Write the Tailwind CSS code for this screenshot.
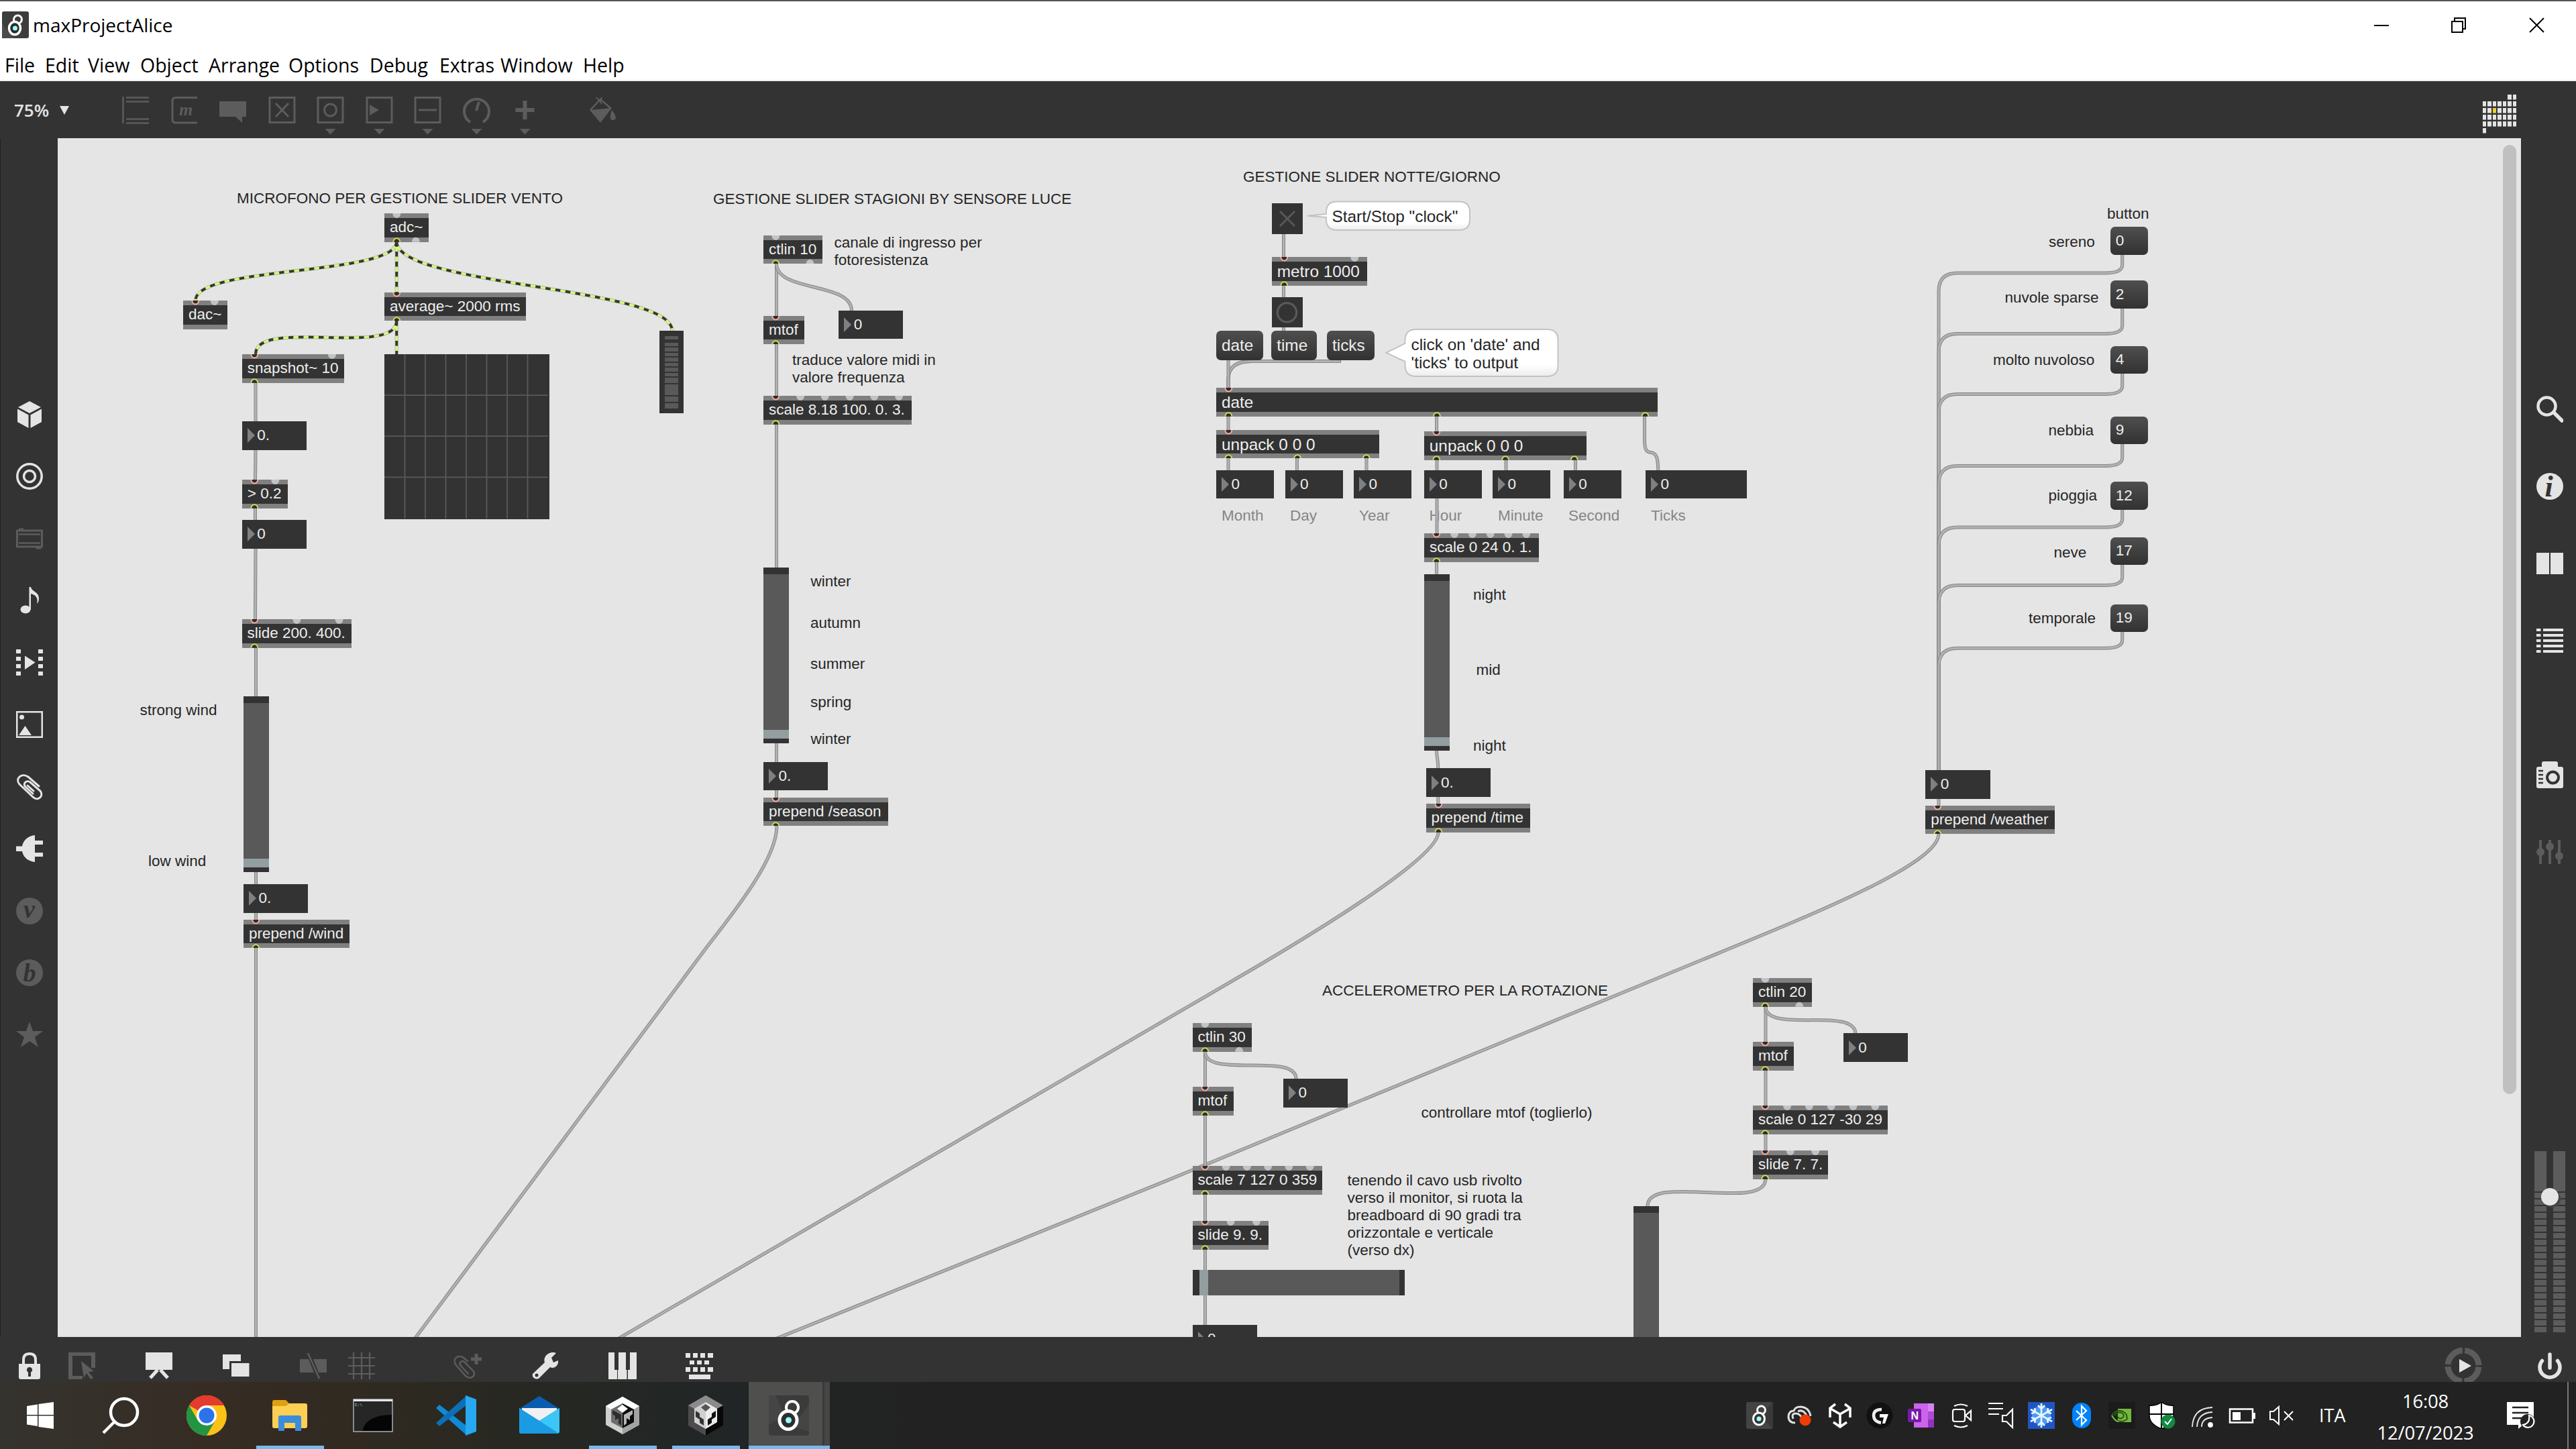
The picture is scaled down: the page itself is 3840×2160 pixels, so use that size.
<!DOCTYPE html>
<html lang="it">
<head>
<meta charset="utf-8">
<title>maxProjectAlice</title>
<script src="https://cdn.jsdelivr.net/npm/@tailwindcss/browser@4"></script>
</head>
<body class="w-[3840px] h-[2160px] overflow-hidden flex flex-col bg-[#333333] font-['Open_Sans',sans-serif]">

<!-- title bar and menu -->
<header class="h-[121px] shrink-0 bg-white border-t-2 border-t-[#555555] border-b-2 border-b-[#f0f0f0] flex flex-col text-black">
  <div class="h-[70px] flex items-center">
    <svg class="ml-[3px] w-10 h-10" viewBox="0 0 40 40"><rect width="40" height="40" rx="3" fill="#3d3d3d"/><path d="M0 40V18L18 40z" fill="#4b4b4b"/><circle cx="23.500" cy="12" r="6" fill="none" stroke="#fff" stroke-width="3"/><ellipse cx="19" cy="25" rx="8.500" ry="9.500" fill="#2a2a2a" stroke="#fff" stroke-width="3.500"/><circle cx="19.500" cy="25" r="3.500" fill="#9ff"/></svg>
    <span class="ml-[6px] text-[28px] leading-10">maxProjectAlice</span>
    <div class="ml-auto flex items-center">
      <svg class="w-[116px] h-[60px]" viewBox="0 0 116 60" fill="none" stroke="#000" stroke-width="2"><path d="M47 31h22"/></svg>
      <svg class="w-[116px] h-[60px]" viewBox="0 0 116 60" fill="none" stroke="#000" stroke-width="2"><path d="M47 25h16v16h-16zM51 25v-5h16v16h-4"/></svg>
      <svg class="w-[116px] h-[60px]" viewBox="0 0 116 60" fill="none" stroke="#000" stroke-width="2"><path d="M47 20l21 21M68 20l-21 21"/></svg>
    </div>
  </div>
  <nav class="h-[47px] flex pl-[7px] text-[28.500px] leading-[50px] whitespace-nowrap">
    <span class="w-[60px]">File</span><span class="w-[64px]">Edit</span><span class="w-[78px]">View</span><span class="w-[102px]">Object</span><span class="w-[119px]">Arrange</span><span class="w-[121px]">Options</span><span class="w-[104px]">Debug</span><span class="w-[91px]">Extras</span><span class="w-[123px]">Window</span><span>Help</span>
  </nav>
</header>

<!-- object toolbar -->
<div class="h-[85px] shrink-0 flex items-start text-[#e4e4e4]">
  <div class="w-[165px] pl-[21px] pt-[25px] flex items-center text-[26px] leading-[36px] font-semibold">75%<svg class="ml-[16px] w-[14px] h-[13px]" viewBox="0 0 14 13"><path d="M0 0h14l-7 13z" fill="#e4e4e4"/></svg></div>
  <div class="flex pt-[21px] text-[#5c5c5c]">
    <svg class="w-[72.500px] h-[60px]" viewBox="0 0 72.500 60" fill="none" stroke="currentColor" stroke-width="2.500"><path d="M18.500 2v40M23 3.500h34M23 9.500h34M23 35.500h34M23 41.500h34"/></svg>
    <svg class="w-[72.500px] h-[60px]" viewBox="0 0 72.500 60" fill="none" stroke="currentColor" stroke-width="3"><path d="M56 3.500H24q-5 0-5 5v28q0 4.500 5 4.500h32"/><text x="29" y="30" font-family="Liberation Serif" font-style="italic" font-weight="bold" font-size="26" fill="currentColor" stroke="none">m</text></svg>
    <svg class="w-[72.500px] h-[60px]" viewBox="0 0 72.500 60"><path d="M17 9h40v23h-6v9l-10-9H17z" fill="currentColor"/></svg>
    <svg class="w-[72.500px] h-[60px]" viewBox="0 0 72.500 60" fill="none" stroke="currentColor" stroke-width="3"><path d="M19 3.500h37v37H19zM28 12l19 20M47 12l-19 20"/></svg>
    <svg class="w-[72.500px] h-[60px]" viewBox="0 0 72.500 60" fill="none" stroke="currentColor" stroke-width="3"><path d="M19 3.500h37v37H19z"/><circle cx="37.500" cy="22" r="9"/><path d="M29.500 50h16l-8 8.500z" fill="currentColor" stroke="none"/></svg>
    <svg class="w-[72.500px] h-[60px]" viewBox="0 0 72.500 60" fill="none" stroke="currentColor" stroke-width="3"><path d="M19 3.500h37v37H19z"/><path d="M23 14l14 8-14 8zM29.500 50h16l-8 8.500z" fill="currentColor" stroke="none"/></svg>
    <svg class="w-[72.500px] h-[60px]" viewBox="0 0 72.500 60" fill="none" stroke="currentColor" stroke-width="3"><path d="M19 3.500h37v37H19zM24 22h27"/><path d="M29.500 50h16l-8 8.500z" fill="currentColor" stroke="none"/></svg>
    <svg class="w-[72.500px] h-[60px]" viewBox="0 0 72.500 60" fill="none" stroke="currentColor" stroke-width="4"><path d="M28 40a18.500 18.500 0 1 1 19 0M37 23l4-13"/><path d="M29.500 50h16l-8 8.500z" fill="currentColor" stroke="none"/></svg>
    <svg class="w-[72.500px] h-[60px]" viewBox="0 0 72.500 60" fill="none" stroke="currentColor" stroke-width="6"><path d="M37.500 8v28M23.500 22h28"/><path d="M29.500 50h16l-8 8.500z" fill="currentColor" stroke="none"/></svg>
    <svg class="ml-[42px] w-[72.500px] h-[60px]" viewBox="0 0 72.500 60"><path d="M20 22L35 6l16 14" fill="none" stroke="currentColor" stroke-width="2.500"/><path d="M19 22l33-3-17 22zM52 22q8 10 5 14-4 3-7-1-1-5 2-13z" fill="currentColor"/><path d="M29 3l8 10M37 3l-2 7" stroke="currentColor" stroke-width="2"/></svg>
  </div>
  <div class="ml-auto mr-[89px] pt-[20px]"><svg id="matrix" class="w-[50px] h-[60px]" viewBox="0 0 50 60"></svg></div>
</div>

<main class="h-[1787px] shrink-0 flex">
  <!-- left sidebar -->
  <aside class="w-[86px] border-l border-l-[#222222] flex flex-col items-center gap-[52.500px] pt-[391.500px] text-[#e4e4e4]">
    <svg class="w-10 h-10" viewBox="0 0 40 40" fill="currentColor"><path d="M20 0l17 9-17 9L3 9zM2 11.500l16.500 9V40L2 31zM38 11.500l-16.500 9V40L38 31z"/></svg>
    <svg class="w-10 h-10" viewBox="0 0 40 40" fill="none" stroke="currentColor" stroke-width="3.500"><circle cx="20" cy="20" r="18.200"/><circle cx="20" cy="20" r="8.500"/></svg>
    <svg class="w-10 h-10" viewBox="0 0 40 40" fill="none" stroke="#5c5c5c"><rect x="1.500" y="8" width="37" height="24" stroke-width="3"/><path d="M4 13.500h32M4 26.500h32" stroke-width="2.500"/><path d="M4 6h7M30 34h7" stroke-width="3"/></svg>
    <svg class="w-10 h-10" viewBox="0 0 40 40" fill="currentColor"><ellipse cx="14" cy="33.500" rx="7.500" ry="6"/><path d="M19.500 0h2.500c1 7 12 7 12 17 0 4-1 6-3 8 2-8-1-13-9-15v24h-2.500z"/></svg>
    <svg class="w-10 h-10" viewBox="0 0 40 40" fill="currentColor"><path d="M0 0h7v6H0zM0 11h7v6H0zM0 22h7v6H0zM0 33h7v6H0zM33 0h7v6h-7zM33 11h7v6h-7zM33 22h7v6h-7zM33 33h7v6h-7zM13 9.500l15.500 10L13 30z"/></svg>
    <svg class="w-10 h-10" viewBox="0 0 40 40" fill="none" stroke="currentColor" stroke-width="2.500"><path d="M1.250 1.250h37.500v37.500H1.250z"/><path d="M4 36l9.500-14L23 36z" fill="currentColor" stroke="none"/><circle cx="8.500" cy="9" r="3.500" fill="currentColor" stroke="none"/></svg>
    <svg class="w-10 h-10" viewBox="0 0 40 40" fill="none" stroke="currentColor" stroke-width="3" stroke-linecap="round"><path d="M34 19L18 5C8-2-2 8 5 16l20 19c7 7 17-1 11-9L21 13c-5-4-12 2-7 7l11 10M26 26L17 18"/></svg>
    <svg class="w-10 h-10" viewBox="0 0 40 40" fill="currentColor"><path d="M0 16.500h9C11 6 19 1 28 0v8h12v6H28v12h12v6H28v8C19 39 11 34 9 24H0z"/></svg>
    <svg class="w-10 h-10 overflow-visible" viewBox="0 0 40 40"><circle cx="20" cy="20" r="20" fill="#5c5c5c"/><text x="11" y="30" font-family="Liberation Serif" font-style="italic" font-weight="bold" font-size="38" fill="#333">v</text></svg>
    <svg class="w-10 h-10 overflow-visible" viewBox="0 0 40 40"><circle cx="20" cy="20" r="20" fill="#5c5c5c"/><text x="10.500" y="33" font-family="Liberation Serif" font-style="italic" font-weight="bold" font-size="38" fill="#333">b</text></svg>
    <svg class="w-10 h-10" viewBox="0 0 40 40" fill="#5c5c5c"><path d="M20 0l5 14h15L28 23l5 15-13-9-13 9 5-15L0 14h15z"/></svg>
  </aside>

  <!-- patcher canvas: objects sit at free positions -->
  <section id="canvas" class="relative w-[3672px] bg-[#e5e5e5] overflow-hidden font-['Liberation_Sans',sans-serif] text-[22.500px] leading-[26px] text-[#262626] whitespace-pre">
    <div class="absolute right-[7px] top-[10px] w-5 h-[1415px] rounded-[10px] bg-[#c0c0c0]"></div>
  </section>

  <!-- right sidebar -->
  <aside class="w-[82px] flex flex-col items-center pl-[4px] pt-[384px] text-[#e4e4e4]">
    <svg class="w-10 h-10" viewBox="0 0 40 40" fill="none" stroke="currentColor"><circle cx="15.500" cy="15.500" r="13" stroke-width="4.500"/><path d="M26 25l12 12" stroke-width="5.500" stroke-linecap="round"/></svg>
    <svg class="mt-[75px] w-10 h-10 overflow-visible" viewBox="0 0 40 40"><circle cx="20" cy="20" r="20" fill="currentColor"/><text x="12.500" y="34.500" font-family="Liberation Serif" font-style="italic" font-weight="bold" font-size="44" fill="#333">i</text></svg>
    <svg class="mt-[75px] w-10 h-10" viewBox="0 0 40 40" fill="currentColor"><path d="M0 4h19v32H0zM21 4h19v32H21z"/></svg>
    <svg class="mt-[75px] w-10 h-10" viewBox="0 0 40 40" fill="none" stroke="currentColor" stroke-width="4"><path d="M0 4h6.500M10 4h30M0 12h6.500M10 12h30M0 20h6.500M10 20h30M0 28h6.500M10 28h30M0 36h6.500M10 36h30"/></svg>
    <svg class="mt-[160px] w-10 h-10" viewBox="0 0 40 40"><path d="M8 8V3q0-3 3-3h18q3 0 3 3v5h5q3 0 3 3v26q0 3-3 3H3q-3 0-3-3V11q0-3 3-3z" fill="currentColor"/><circle cx="24.500" cy="24" r="8.500" fill="none" stroke="#333" stroke-width="4"/><path d="M3 14h7M3 20h7M3 26h7M3 32h7" stroke="#333" stroke-width="2.500"/></svg>
    <svg class="mt-[75px] w-10 h-10" viewBox="0 0 40 40" fill="#5c5c5c"><path d="M4 2h4v36H4zM18 2h4v36h-4zM32 2h4v36h-4z"/><circle cx="6" cy="20" r="6"/><circle cx="20" cy="12" r="6"/><circle cx="34" cy="26" r="6"/></svg>
    <div class="relative mt-[426px] w-[46px] h-[270px] flex justify-between">
      <div class="w-[18px] bg-[linear-gradient(#5c5c5c,#5c5c5c)] bg-[length:100%_60px] bg-no-repeat pt-[62px]"><div class="h-[208px] bg-[repeating-linear-gradient(#5c5c5c_0_8px,#333_8px_10px)]"></div></div>
      <div class="w-[18px] bg-[linear-gradient(#5c5c5c,#5c5c5c)] bg-[length:100%_60px] bg-no-repeat pt-[62px]"><div class="h-[208px] bg-[repeating-linear-gradient(#5c5c5c_0_8px,#333_8px_10px)]"></div></div>
      <div class="absolute left-[10px] top-[55px] size-[26px] rounded-full bg-[#e4e4e4] shadow-[3px_3px_0_#444]"></div>
    </div>
  </aside>
</main>

<!-- patcher footer -->
<footer class="h-[67px] shrink-0 overflow-hidden flex items-start pt-[23px] pl-[24px] text-[#e4e4e4]">
  <svg class="w-10 h-10" viewBox="0 0 40 40"><path d="M4 17h32v20q0 3-3 3H7q-3 0-3-3z" fill="currentColor"/><path d="M11 18v-7q0-9 9-9t9 9v7" fill="none" stroke="currentColor" stroke-width="4"/><path d="M20 22a4 4 0 0 1 2 7.500V36h-4v-6.500a4 4 0 0 1 2-7.500z" fill="#333"/></svg>
  <svg class="ml-[38px] w-10 h-10" viewBox="0 0 40 40"><path d="M0 0h40v23h-6V5H6v30h15v5H0z" fill="#5c5c5c"/><path d="M19 13l19 15-8 1 7 9-4 2-6-9-4 7z" fill="#5c5c5c"/></svg>
  <svg class="ml-[75px] w-10 h-10" viewBox="0 0 40 40"><path d="M0 0h40v26H0z" fill="currentColor"/><path d="M18 26L7 38M22 26l11 12" stroke="currentColor" stroke-width="5"/></svg>
  <svg class="ml-[75px] w-[42px] h-10" viewBox="0 0 42 40"><path d="M0 3h27v22H0z" fill="currentColor"/><path d="M11.500 14.500H41v23H11.500z" fill="currentColor" stroke="#333" stroke-width="3"/></svg>
  <svg class="ml-[73px] w-10 h-10" viewBox="0 0 40 40"><path d="M0 10h13l8 20H0zM40 10H20l8 20h12z" fill="#5c5c5c"/><path d="M12 1l17 38" stroke="#5c5c5c" stroke-width="2.500"/></svg>
  <svg class="ml-[32px] w-10 h-10" viewBox="0 0 40 40" fill="none" stroke="#5c5c5c" stroke-width="2.200"><path d="M8 0v40M20 0v40M32 0v40M0 8h40M0 20h40M0 32h40"/></svg>
  <svg class="ml-[117px] w-[42px] h-10" viewBox="0 0 42 40" fill="none" stroke="#5c5c5c" stroke-width="2.500" stroke-linecap="round"><path d="M21 13l-6-5C7 2-3 10 4 19l14 16c8 7 17-1 11-8L16 14c-4-3-9 2-5 6l11 12"/><path d="M34 2v16M26 10h16" stroke-width="5" stroke-linecap="butt"/></svg>
  <svg class="ml-[75px] w-10 h-10" viewBox="0 0 40 40"><path d="M36 1l-7 7 3 7 7-3c1 8-6 13-12 10L11 38c-4 4-12 0-10-6l18-17C16 7 24-1 33 0z" fill="currentColor"/><circle cx="7" cy="34" r="2.500" fill="#333"/></svg>
  <svg class="ml-[74px] w-[42px] h-10" viewBox="0 0 42 40" fill="currentColor"><path d="M0 0h9v26h4v14H0zM15 26V0h11v26h1.500v14H14V26zM32 0h10v40H29V26h3z"/></svg>
  <svg class="ml-[73px] w-[42px] h-10" viewBox="0 0 42 40" fill="currentColor"><path d="M0 1h7v7H0zM11 1h7v7h-7zM22 1h7v7h-7zM33 1h8v7h-8zM6 12h7v6H6zM17 12h7v6h-7zM28 12h7v6h-7zM0 22h7v7H0zM11 22h7v7h-7zM22 22h7v7h-7zM33 22h8v7h-8zM5 33h32v7H5z"/></svg>
  <svg class="ml-auto -mt-[8px] w-[56px] h-[56px] shrink-0" viewBox="0 0 56 56"><circle cx="28" cy="28" r="23" fill="none" stroke="#5c5c5c" stroke-width="9" stroke-dasharray="32.600 3.500" stroke-dashoffset="-1.750"/><path d="M22 18l18 10-18 10z" fill="currentColor"/></svg>
  <svg class="ml-[81px] mr-[19px] w-10 h-10" viewBox="0 0 40 40" fill="none" stroke="currentColor" stroke-width="5.500" stroke-linecap="round"><path d="M8.500 12.500a15 15 0 1 0 23 0M20 3v20"/></svg>
</footer>

<!-- Windows taskbar -->
<div class="h-[100px] shrink-0 flex bg-[linear-gradient(90deg,#35332e_0%,#362c24_8%,#302a21_14%,#272822_20%,#222626_27%,#222222_36%,#222222_100%)] text-white">
  <div class="w-[120px] flex items-center justify-center"><svg class="w-10 h-10" viewBox="0 0 40 40" fill="#fff"><path d="M0 6l16-2.500V19H0zM17.500 3L40 0v19H17.500zM0 20.500h16V36L0 33.500zM17.500 20.500H40V40l-22.500-3z"/></svg></div>
  <div class="w-[126px] pl-[32px] flex items-center"><svg class="w-[56px] h-[56px]" viewBox="0 0 56 56" fill="none" stroke="#fff" stroke-width="4.500"><circle cx="33" cy="23" r="20"/><path d="M19 37L2 54"/></svg></div>
  <div class="w-[124px] flex items-center justify-center"><svg class="w-[60px] h-[60px]" viewBox="0 0 60 60"><circle cx="30" cy="30" r="30" fill="#fbc116"/><path d="M30 30L4 15A30 30 0 0 1 56 15H30z" fill="#e33b2e"/><path d="M4 15A30 30 0 0 0 30 60L43 37.500 30 44 17 37.500z" fill="#249443"/><circle cx="30" cy="30" r="15" fill="#fff"/><circle cx="30" cy="30" r="11.500" fill="#2a73e8"/></svg></div>
  <div class="w-[124px] px-[12px] flex flex-col items-center"><svg class="mt-[27px] w-[52px] h-[46px]" viewBox="0 0 52 46"><path d="M0 3q0-3 3-3h17l5 5-4 5H0z" fill="#e0a010"/><path d="M0 9h20l5-4h24q3 0 3 3v31q0 3-3 3H3q-3 0-3-3z" fill="#fdcf55"/><path d="M9 46V26q0-3 3-3h28q3 0 3 3v20h-9V34H18v12z" fill="#3b8ddb"/></svg><div class="mt-auto h-[5px] w-[101px] bg-[#76b9ed]"></div></div>
  <div class="w-[124px] flex items-center justify-center"><svg class="w-[60px] h-[50px]" viewBox="0 0 60 50"><rect x="1" y="1" width="58" height="48" fill="#050505" stroke="#a9b0b8" stroke-width="1.500"/><path d="M2 2h56v22Q20 24 14 48H2z" fill="#262626"/><path d="M1 1h58v3H1z" fill="#e4e6ea"/><text x="3" y="11" font-family="Liberation Mono" font-size="6" fill="#ddd">C:\</text></svg></div>
  <div class="w-[124px] flex items-center justify-center"><svg class="w-[60px] h-[60px]" viewBox="0 0 60 60"><path d="M0 19l5-5 41 32v14z" fill="#0f8ad6"/><path d="M0 41l5 5L46 14V0z" fill="#0b6fb8"/><path d="M44 0l16 6v48l-16 6z" fill="#27a9f1"/></svg></div>
  <div class="w-[124px] flex items-center justify-center"><svg class="-mt-[2px] w-[60px] h-[56px]" viewBox="0 0 60 56"><path d="M0 19L30 0l30 19v6H0z" fill="#0a5cb0"/><path d="M4 18h52v10L30 42 4 28z" fill="#f1f1f3"/><path d="M0 18l30 19L60 18v35q0 3-3 3H3q-3 0-3-3z" fill="#1fa2e6"/><path d="M60 18L30 37l28 18q2-1 2-3z" fill="#3cc6f5"/><path d="M0 18v35q0 3 3 3h54L30 37z" fill="#1b9be2"/></svg></div>
  <div class="w-[124px] flex flex-col items-center"><svg class="mt-[22px] w-[50px] h-[56px]" viewBox="0 0 50 56"><path d="M25 0l25 14v28L25 56 0 42V14z" fill="#cfcfcf"/><path d="M25 0l25 14-8 5-17-9-17 9-8-5z" fill="#fff"/><path d="M50 14v28L25 56v-9l17-9V19z" fill="#a3a3a3"/><path d="M25 10l17 9v19l-17 9z" fill="#0c0c0c"/><path d="M25 10L8 19v19l17 9z" fill="#6d6d6d"/><path d="M25 12l8 6-8 6-8-6z" fill="#fff"/><path d="M10 20l13 7v16l-4-3v-8l-5 3v-6l-4-3z" fill="#2c2c2c"/><path d="M40 20l-13 7v16l4-3v-8l5 3v-6l4-3z" fill="#b5b5b5"/></svg><div class="mt-auto h-[5px] w-[101px] bg-[#76b9ed]"></div></div>
  <div class="w-[124px] flex flex-col items-center"><svg class="mt-[20px] w-[52px] h-[60px]" viewBox="0 0 52 60"><path d="M26 0l26 15v30L26 60 0 45V15z" fill="#4c4c4c"/><path d="M26 0l26 15-9 5-17-10-17 10-9-5z" fill="#8b8b8b"/><path d="M52 15v30L26 60V50l17-10V20z" fill="#080808"/><path d="M26 10l17 10v20l-17 10L9 40V20z" fill="#ececec"/><path d="M26 10v40L9 40V20z" fill="#cfcfcf"/><path d="M26 13l7 5-7 6-7-6z" fill="#555"/><path d="M11 23l6 4v5l6 4v9l-6-4v-5l-6-4z" fill="#333"/><path d="M41 23l-6 4v5l-6 4v9l6-4v-5l6-4z" fill="#111"/></svg><div class="mt-auto h-[5px] w-[101px] bg-[#76b9ed]"></div></div>
  <div class="ml-[2px] w-[121px] flex flex-col bg-[linear-gradient(90deg,#4f4f4d_0_110px,#393939_110px_113px,#464645_113px)]"><svg class="mt-[20px] ml-[30px] w-[60px] h-[60px]" viewBox="0 0 60 60"><rect width="60" height="60" rx="4" fill="#3b3b3b"/><path d="M0 0h10l14 30L0 44zM60 14L36 46l24 8z" fill="#454545"/><circle cx="35" cy="18" r="9" fill="none" stroke="#fff" stroke-width="4"/><ellipse cx="29" cy="37" rx="13" ry="13.500" fill="#2e2e2e" stroke="#fff" stroke-width="5"/><circle cx="29.500" cy="37" r="4.500" fill="#9ff"/></svg><div class="mt-auto h-[5px] bg-[#76b9ed]"></div></div>

  <div class="ml-auto flex items-center">
    <svg class="w-[60px] h-10" viewBox="-10 0 60 40"><rect width="40" height="40" rx="3" fill="#444"/><path d="M40 0L20 20l20 20z" fill="#393939"/><circle cx="22.500" cy="12" r="6" fill="none" stroke="#fff" stroke-width="2.800"/><ellipse cx="19" cy="25" rx="8.500" ry="9" fill="#333" stroke="#fff" stroke-width="3"/><circle cx="19" cy="25" r="3.500" fill="#9ff"/></svg>
    <svg class="w-[60px] h-10" viewBox="-10 0 60 40" fill="none" stroke="#ddd"><path d="M13 31q-10 0-10-10 1-8 8-8 2-6 10-6 13 1 15 14" stroke-width="3"/><path d="M10 25q-3-8 4-8 6 0 10 8M17 14q8-4 13 6" stroke-width="3"/><circle cx="28" cy="27" r="8.500" fill="#f03c02" stroke="none"/></svg>
    <svg class="w-[60px] h-10" viewBox="-10 0 60 40" fill="none" stroke="#fff" stroke-width="3.500"><path d="M13 3L5 9v14M27 3l8 6v14M6 10l14 8 14-8M20 18v18M10 30l10 7 10-7"/></svg>
    <svg class="w-[60px] h-10" viewBox="-10 0 60 40"><circle cx="19" cy="20" r="19.500" fill="#111"/><path d="M22 11q-12 0-12 9t11 11" fill="none" stroke="#eee" stroke-width="4.500"/><path d="M19 18h13l-5 14h-4l2-9h-6z" fill="#fff"/></svg>
    <svg class="w-[60px] h-10" viewBox="-10 0 60 40"><path d="M10 2h30v36H10z" fill="#ca64ea"/><path d="M31 2h9v12h-9z" fill="#d783f2"/><path d="M31 14h9v12h-9z" fill="#ae4bd5"/><path d="M31 26h9v12h-9z" fill="#9332bf"/><rect x="1" y="10" width="20" height="20" rx="2" fill="#7719aa"/><text x="5.500" y="26" font-family="Liberation Sans" font-weight="bold" font-size="16" fill="#fff">N</text></svg>
    <svg class="w-[60px] h-10" viewBox="-10 0 60 40" fill="none" stroke="#fff" stroke-width="2.200"><rect x="8" y="11" width="18" height="18" rx="3"/><path d="M27 20l8-7v14zM10 6q10-5 20 0M10 35q10 5 20 0"/></svg>
    <svg class="w-[60px] h-10" viewBox="-10 0 60 40" fill="none" stroke="#fff" stroke-width="2.200"><path d="M1 2h22M1 10h22M1 18h16M22 20h6l9-9v27l-9-9h-6z"/></svg>
    <svg class="w-[60px] h-10" viewBox="-10 0 60 40"><rect width="40" height="40" fill="#1f56c4"/><circle cx="20" cy="20" r="14" fill="#4f9af0"/><path d="M20 2v36M4 11l32 18M36 11L4 29M15 5l5 5 5-5M15 35l5-5 5 5M5 17l6-2-1-6M35 17l-6-2 1-6M5 23l6 2-1 6M35 23l-6 2 1 6" fill="none" stroke="#e3f4ff" stroke-width="2.800"/></svg>
    <svg class="w-[60px] h-10" viewBox="-10 0 60 40"><rect x="6" y="1" width="28" height="38" rx="14" fill="#0082fc"/><path d="M12 13l15 14-7 7V6l7 7-15 14" fill="none" stroke="#fff" stroke-width="2.200"/></svg>
    <svg class="w-[60px] h-10" viewBox="-10 0 60 40"><rect width="40" height="40" fill="#1b1b1b"/><path d="M14 10h20v20H14z" fill="#76b83f"/><path d="M5 20q8-11 18-5 6 4 4 9M9 20q6-7 12-3 4 4-1 7-5 2-7-4M5 20q5 9 15 9 6-1 9-5" fill="none" stroke="#2c5a14" stroke-width="2"/><path d="M5 20q5 9 10 9" fill="none" stroke="#76b83f" stroke-width="2"/></svg>
    <svg class="w-[60px] h-10" viewBox="-10 0 60 40"><path d="M19 0q8 6 18 5v15q0 13-18 20Q1 33 1 20V5q11 1 18-5z" fill="#fff" stroke="#000" stroke-width="1.500"/><path d="M19 0v40M1 18h36" stroke="#000" stroke-width="2"/><circle cx="29" cy="29" r="10.500" fill="#128a43"/><path d="M24 29l4 4 6-8" fill="none" stroke="#fff" stroke-width="2"/></svg>
    <svg class="w-[60px] h-10" viewBox="-10 0 60 40" fill="none" stroke="#fff" stroke-width="1.800"><path d="M5 37Q6 9 35 8M12 37q1-21 23-22M19 37q0-13 16-14" opacity=".9"/><circle cx="32" cy="34" r="3" fill="#fff"/></svg>
    <svg class="w-[60px] h-10" viewBox="-10 0 60 40" fill="none" stroke="#fff" stroke-width="2.500"><path d="M1 10.500h34v20H1z"/><path d="M5 15h12v12H5zM36 16h3v9h-3z" fill="#fff" stroke="none"/></svg>
    <svg class="w-[60px] h-10" viewBox="-10 0 60 40" fill="none" stroke="#fff" stroke-width="2"><path d="M1 14h5l8-7v26l-8-7H1zM22 14l13 13M35 14L22 27"/></svg>
    <span class="ml-[24px] w-[48px] text-[27px] leading-9">ITA</span>
    <div class="ml-[22px] w-[177px] pt-[3px] flex flex-col items-center text-[27.500px] leading-[47px] tracking-[-0.2px]"><span>16:08</span><span>12/07/2023</span></div>
    <svg class="ml-[33px] mr-[48px] w-[42px] h-10" viewBox="0 0 42 40"><path d="M0 0h40v34H24l-7 6v-6H0z" fill="#fff"/><path d="M8 8h24M8 16h24M8 24h16" stroke="#222" stroke-width="2.500"/><circle cx="31" cy="29" r="11" fill="#222"/><path d="M33 20a9 9 0 1 1-9 14q11-2 9-14z" fill="none" stroke="#fff" stroke-width="2.200"/></svg>
    <div class="h-[100px] w-[13px] border-l-2 border-l-[#777777]"></div>
  </div>
</div>

<script>
const OX = 86, OY = 206;
const canvas = document.getElementById('canvas');
const put = (cls, x, y, w, h, html) => {
  const d = document.createElement('div');
  d.className = cls;
  d.style.left = (x - OX) + 'px'; d.style.top = (y - OY) + 'px';
  if (w) d.style.width = w + 'px';
  if (h) d.style.height = h + 'px';
  d.innerHTML = html || '';
  canvas.appendChild(d);
};
const esc = s => s.replace(/>/g, '&gt;');

// comments: x, baseline, text
const label = (x, b, t) => put('absolute', x, b - 20.3, 0, 0, t);
[[353,303.5,'MICROFONO PER GESTIONE SLIDER VENTO'],[1063,304,'GESTIONE SLIDER STAGIONI BY SENSORE LUCE'],[1853,271.500,'GESTIONE SLIDER NOTTE/GIORNO'],[1971,1484,'ACCELEROMETRO PER LA ROTAZIONE'],
 [208.5,1066.4,'strong wind'],[221,1291.5,'low wind'],
 [1243.5,369.5,'canale di ingresso per\nfotoresistenza'],[1181,544,'traduce valore midi in\nvalore frequenza'],
 [1208.5,874,'winter'],[1208,936.7,'autumn'],[1208,997.5,'summer'],[1208,1054.5,'spring'],[1208.5,1109.5,'winter'],
 [2196,894,'night'],[2200.5,1006.7,'mid'],[2196,1119,'night'],
 [3141,326.3,'button'],[3054,368.5,'sereno'],[2988.5,451,'nuvole sparse'],[2971,543.8,'molto nuvoloso'],[3053.5,649,'nebbia'],[3053.5,746.3,'pioggia'],[3061.500,831,'neve'],[3024,929,'temporale'],
 [2118.5,1666.4,'controllare mtof (toglierlo)'],
 [2008.5,1766.8,'tenendo il cavo usb rivolto\nverso il monitor, si ruota la\nbreadboard di 90 gradi tra\norizzontale e verticale\n(verso dx)']
].forEach(a => label(...a));
[[1821,'Month'],[1923,'Day'],[2026,'Year'],[2130.5,'Hour'],[2233,'Minute'],[2338,'Second'],[2461,'Ticks']]
  .forEach(([x, t]) => put('absolute text-[#858585]', x, 756.2, 0, 0, t));

// patch cords
const cords = [
  'M381 571V628','M381 670L380.5 715','M380.500 757V775','M381 818L380.500 923','M381.500 966V1038','M381.500 1300V1318','M381.500 1360V1371','M381.500 1413V2000',
  'M1157.500 393V471','M1157.500 393C1157.500 436 1269.500 420 1269.500 463','M1157.500 513V590','M1157.500 632V846','M1157.500 1108V1136','M1157.500 1177V1189',
  'M1158 1231C1158 1275 1110 1340 1055 1410L615 2000',
  'M1913.500 349V383','M1913.500 426V443','M1913.500 488V493',
  'M1913.500 537V538.500H1866C1842 538.500 1831 548 1831 565V578','M1996.500 537V538.500H1866C1842 538.500 1831 548 1831 565V578','M1831 537V578',
  'M1831 621V641','M2141.500 621V643','M2451.500 621V655C2451.500 670 2454 674 2461 674.500C2469 675.500 2471.700 682 2471.700 701',
  'M1831 683V701','M1933.500 683V701','M2037 683V701','M2142 686V701','M2245 686V701','M2348.500 686V701',
  'M2142 743V796','M2141.500 838V856','M2141.500 1118C2141.500 1130 2143.800 1130 2143.800 1146','M2143.800 1187V1198',
  'M2144 1241C2144 1275 1990 1372 1875 1440L914 2000',
  'M2890 1190V1201','M2890 1243C2890 1290 2685 1370 2515 1440L1740 1759.600L1146 2000',
  'M2632 1501V1553','M2632 1501C2632 1541 2766 1500 2766 1541','M2632 1596V1648','M2632 1690V1715','M2632 1757C2632 1807 2456 1748 2456 1798',
  'M1796.500 1568V1620','M1796.500 1568C1796.500 1608 1932 1568 1932 1608','M1796.500 1663V1738','M1796.500 1780V1820','M1796.500 1863V1893','M1796.500 1931V1975'
];
[[379,407],[459.5,497.5],[557,587.5],[662,694.4],[759.5,786],[842,872.5],[942,966.3]].forEach(([b, h]) =>
  cords.push(`M3163.700 ${b}V${h-12}Q3163.700 ${h} 3138 ${h}H2918Q2890 ${h} 2890 ${h+27}V1149`));
const sig = ['M591.200 360C591.200 412 291.400 395 291.400 448','M591.200 360V436','M591.200 360C591.200 427 1002 427 1002 493','M591.200 478V528','M591.200 478C591.200 533 381 473 381 528'];
const draw = (list, c, w, extra) => list.map(d => `<path d="${d}" stroke="${c}" stroke-width="${w}" ${extra || ''}/>`).join('');
put('absolute', OX, OY, 3672, 1787, `<svg class="block w-full h-full" viewBox="86 206 3672 1787" fill="none">
 ${cords.map(d => draw([d], '#868686', 5) + draw([d], '#b1b1b1', 3)).join('')}
 ${draw(sig, '#a9a9a9', 5)}${draw(sig, '#d6f97c', 3.6)}${draw(sig, '#34382a', 3.8, 'stroke-dasharray="7.500 7.500"')}</svg>`);

// object boxes: x, y, w, text, inlets, outlets (1 = connected), large font
const obj = (x, y, w, t, ins, outs, big, h = 42.7) => {
  const pos = (n, i) => n === 1 ? 18.3 : 18.3 + i * (w - 37) / (n - 1);
  let s = '';
  [...ins].forEach((c, i) => { const p = pos(ins.length, i);
    s += c === '1' ? `<path d="M${p-5} 0a5 5.500 0 0 0 10 0" fill="#2d2d2d" stroke="#f7ab9c" stroke-width="2"/>` : `<path d="M${p-6} 0a6 7 0 0 0 12 0z" fill="#c1c4c6"/>`; });
  [...outs].forEach((c, i) => { const p = pos(outs.length, i);
    s += c === '1' ? `<path d="M${p-5} ${h}a5 5.500 0 0 1 10 0" fill="#2d2d2d" stroke="#cfdb57" stroke-width="2"/>` : `<path d="M${p-6} ${h}a6 7 0 0 1 12 0z" fill="#c1c4c6"/>`; });
  put('absolute bg-[#333333] border-y-[7.500px] border-[#808080] text-[#eeeeee] pl-[8px] ' + (big ? 'text-[24.375px] leading-[29px]' : 'leading-[28px]'), x, y, w, h, esc(t));
  put('absolute', x, y, w, h, `<svg class="block w-full h-full" viewBox="0 0 ${w} ${h}">${s}</svg>`);
};
[[573,318,65.5,'adc~','0','10'],[273,448,65.5,'dac~','10',''],[573,435.5,210.7,'average~ 2000 rms','1','1'],[360.8,528,152.7,'snapshot~ 10','10','1'],
 [360.8,715,68,'> 0.2','10','1'],[360.5,923,163.3,'slide 200. 400.','100','1'],[363,1370.5,157.7,'prepend /wind','1','1'],
 [1138,350.6,88.2,'ctlin 10','0','10'],[1138,470.5,60.8,'mtof','1','1'],[1138,590,220.8,'scale 8.18 100. 0. 3.','100000','1'],[1138,1188.5,186,'prepend /season','1','1'],
 [1895.7,383,142,'metro 1000','10','1',1],[1813,578,658.3,'date','1','111',1],[1813,640.5,242.5,'unpack 0 0 0','1','111',1],[2122.8,643,242.5,'unpack 0 0 0','1','111',1],
 [2122.9,795.2,171,'scale 0 24 0. 1.','100000','1'],[2125.5,1198,155.8,'prepend /time','1','1'],[2870.3,1200.6,192.7,'prepend /weather','1','1'],
 [2613,1458,88,'ctlin 20','0','10'],[2613,1553,61,'mtof','1','1'],[2613,1648,201,'scale 0 127 -30 29','100000','1'],[2613,1715,112,'slide 7. 7.','100','1'],
 [1777.6,1525,88,'ctlin 30','0','10'],[1777.6,1620,61,'mtof','1','1'],[1777.6,1738,193.4,'scale 7 127 0 359','100000','1'],[1777.6,1820,113.6,'slide 9. 9.','100','1']
].forEach(a => obj(...a));

// number boxes
const num = (x, y, w, t) => put('absolute bg-[#333333] text-[#eeeeee] flex items-center pl-[8px]', x, y, w, 42.7,
  `<svg class="w-[11px] h-[22px] mr-[3.500px]" viewBox="0 0 11 22"><path d="M0 0l11 11L0 22z" fill="#808080"/></svg>${t}`);
[[360.8,628,96,'0.'],[360.8,775,96,'0'],[363,1318,96,'0.'],[1250.2,462.8,96.3,'0'],[1138,1135.5,96,'0.'],
 [1813,700.5,86,'0'],[1915.5,700.5,86,'0'],[2018,700.5,86,'0'],[2122.8,700.5,86,'0'],[2225,700.5,86,'0'],[2330.7,700.5,86,'0'],[2453,700.5,150.8,'0'],
 [2125.5,1145.3,96,'0.'],[2870.3,1148,96.3,'0'],[2747.7,1540.4,96,'0'],[1913,1608,96,'0'],[1777.6,1975,96,'0']].forEach(a => num(...a));

// message boxes
const msg = (x, y, w, h, t, big) => put('absolute rounded-[7px] bg-linear-to-b from-[#4f4f4f] to-[#323232] text-[#eeeeee] flex items-center pl-[8px] pb-[1px] ' + (big ? 'text-[24.375px]' : ''), x, y, w, h, t);
[[1813,493,70,44,'date',1],[1895.2,493,68,44,'time',1],[1978,493,71.3,44,'ticks',1],
 [3145.7,338.3,56,41.5,'0'],[3145.7,418.3,56,41.5,'2'],[3145.7,515.8,56,41.5,'4'],[3145.7,620.8,56,41.5,'9'],[3145.7,718.3,56,41.5,'12'],[3145.7,800.8,56,41.5,'17'],[3145.7,900.8,56,41.5,'19']].forEach(a => msg(...a));

// sliders
const vs = (x, y, h, thumb) => put('absolute bg-[#595959] border-t-[10px] border-b-[7px] border-[#333333] flex flex-col justify-end', x, y, 37.8, h, thumb ? '<div class="h-[13px] bg-[#929ea0]"></div>' : '');
vs(363,1038,262.3,1); vs(1138,845.5,262.7,1); vs(2122.9,855.5,263.3,1); vs(2435.4,1798,263,0);
put('absolute bg-[#595959] border-l-[10px] border-r-[8px] border-[#333333] flex', 1777.6, 1893, 316, 38, '<div class="w-[13px] bg-[#929ea0]"></div>');

// scope, level meter, toggle, button
let g = '';
for (let i = 1; i < 8; i++) g += `M${i*30.5} 0V245`;
for (let i = 1; i < 4; i++) g += `M0 ${i*61.1}H244`;
put('absolute bg-[#333333]', 573, 528, 245.7, 246, `<svg class="block w-full h-full" viewBox="0 0 245.700 246"><path d="${g}" stroke="#595959" stroke-width="1.800"/></svg>`);
put('absolute bg-[#333333]', 983, 493, 36, 123, `<svg class="block w-full h-full" viewBox="0 0 36 123" fill="#595959">${[[8,5],[18,5],[25,6],[33,5],[40,6],[48,5],[55,6],[63,5],[70,8],[80,16],[98,8],[108,8]].map(([y,h]) => `<rect x="8" y="${y}" width="20" height="${h}"/>`).join('')}</svg>`);
put('absolute bg-[#333333]', 1895.7, 303, 46, 46, '<svg class="block w-full h-full" viewBox="0 0 46 46"><path d="M12 12l22 22M34 12L12 34" stroke="#595959" stroke-width="2.800"/></svg>');
put('absolute bg-[#333333]', 1895.7, 443.2, 46, 45, '<svg class="block w-full h-full" viewBox="0 0 46 45"><circle cx="22.500" cy="22.800" r="14.200" fill="none" stroke="#595959" stroke-width="3.200"/></svg>');

// hint bubbles
const grad = '<defs><linearGradient id="bub" x1="0" y1="0" x2="0" y2="1"><stop offset=".75" stop-color="#fff"/><stop offset="1" stop-color="#ececec"/></linearGradient></defs>';
put('absolute', 1946, 297, 250, 50, `<svg class="block w-full h-full" viewBox="0 0 250 50">${grad}<path d="M31 22V19Q31 3.500 47 3.500H229Q245 3.500 245 19V30Q245 46 229 46H47Q31 46 31 30V27L3 24.800z" fill="url(#bub)" stroke="#c3c3c3" stroke-width="2"/></svg>`);
put('absolute text-[24.375px] leading-[28px]', 1985.5, 309, 0, 0, 'Start/Stop "clock"');
put('absolute', 2063, 487, 264, 78, '<svg class="block w-full h-full" viewBox="0 0 264 78"><path d="M31.500 25V20Q31.500 4 48 4H243Q259.500 4 259.500 20V58Q259.500 74 243 74H48Q31.500 74 31.500 58V52L3.500 38.800z" fill="url(#bub)" stroke="#c3c3c3" stroke-width="2"/></svg>');
put('absolute text-[24.375px] leading-[27.500px]', 2103.5, 499.500, 0, 0, "click on 'date' and\n'ticks' to output");

// matrix glyph in the toolbar
const cols = [[0,5,10,5],[7,6,10,4],[15,5,10,4],[22,6,10,4],[30,5,10,4],[37,6,0,5],[45,5,0,5]];
document.getElementById('matrix').innerHTML = cols.map(([x,w,y,n],c) => Array.from({length:n}, (_,r) =>
  `<rect x="${x}" y="${y+r*10}" width="${w}" height="7.500" fill="${c===2&&r===1?'#f0d020':'#e4e4e4'}"/>`).join('')).join('');
</script>
</body>
</html>
